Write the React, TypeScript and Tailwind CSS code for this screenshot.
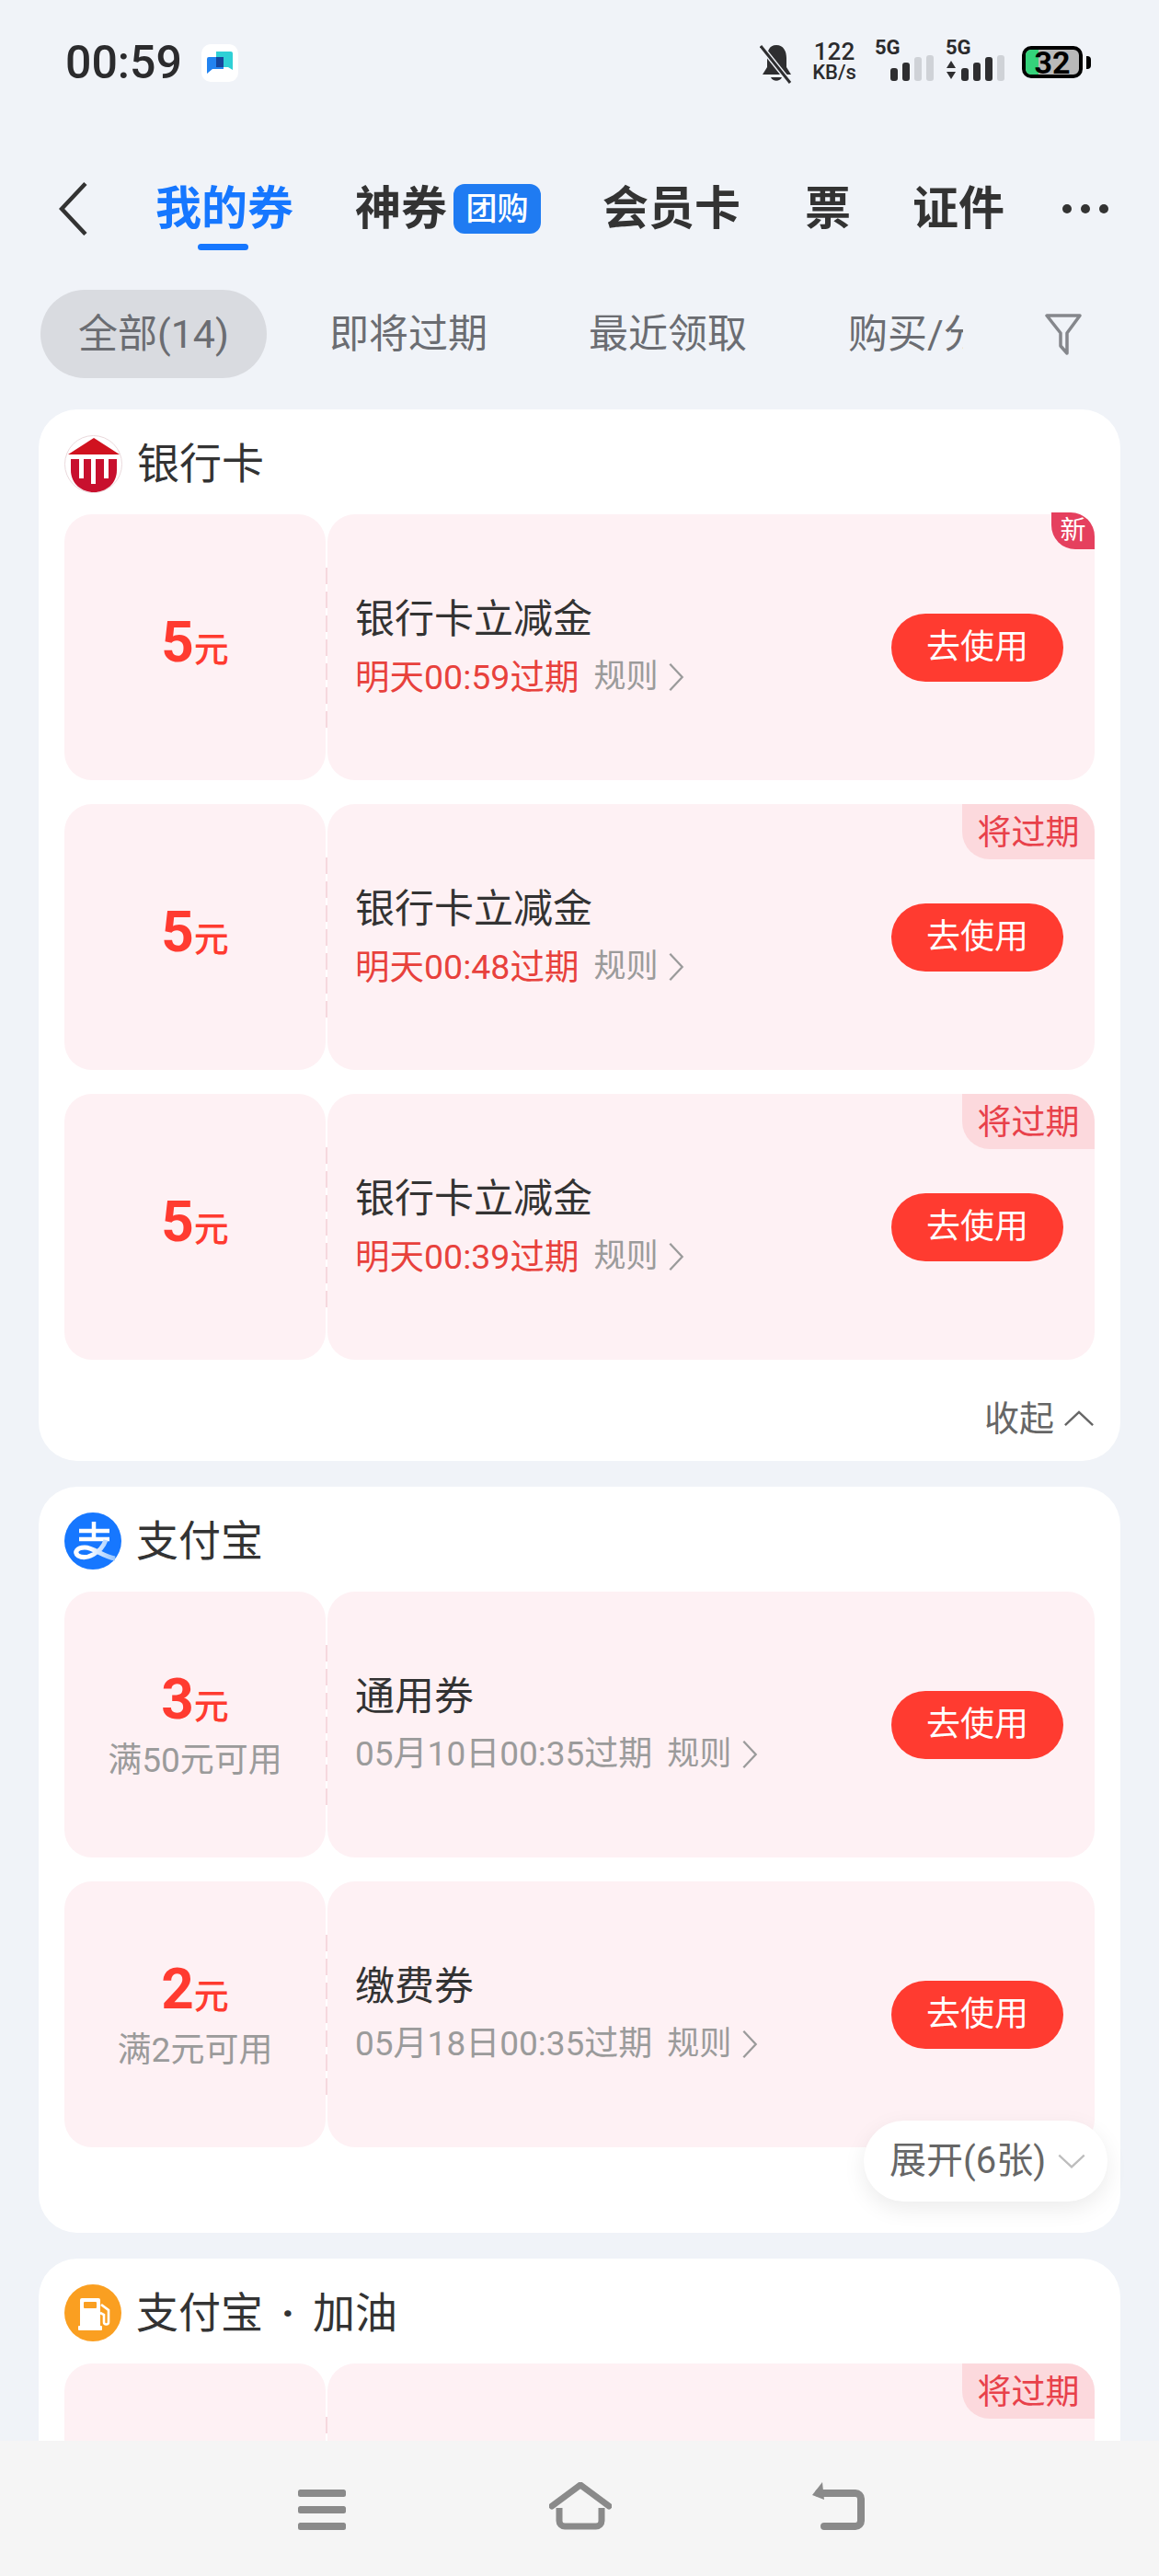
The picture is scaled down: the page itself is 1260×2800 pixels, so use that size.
import React from "react";

const FONT = 'Roboto, "Noto Sans CJK SC", sans-serif';

function Chevron({ dir, className }: { dir: "left" | "right" | "up" | "down"; className?: string }) {
  const d = {
    left: "M18 2 L3 18 L18 34",
    right: "M3 2 L18 18 L3 34",
    up: "M2 18 L18 3 L34 18",
    down: "M2 3 L18 18 L34 3",
  }[dir];
  const box = dir === "left" || dir === "right" ? "0 0 21 36" : "0 0 36 21";
  return (
    <svg viewBox={box} className={className} fill="none" stroke="currentColor" strokeWidth="2.6">
      <path d={d} />
    </svg>
  );
}

function Signal({ lit }: { lit: number }) {
  return (
    <svg width="48" height="28" viewBox="0 0 48 28">
      {[0, 1, 2, 3].map((i) => {
        const h = [14, 20, 26, 28][i];
        return (
          <rect key={i} x={i * 13} y={28 - h} width="8" height={h} rx="3" fill={i < lit ? "#2e2e30" : "#cfd2d7"} />
        );
      })}
    </svg>
  );
}

function StatusBar() {
  return (
    <div className="h-[170px] flex items-start justify-between pl-[71px] pr-[74px] pt-[44px] text-[#2b2b2d]">
      <div className="flex items-center">
        <span className="text-[50px] leading-[48px] font-medium">00:59</span>
        <div className="ml-[21px] w-[40px] h-[41px] rounded-[10px] bg-white flex items-center justify-center">
          <svg width="30" height="28" viewBox="0 0 30 28">
            <path d="M11 2 H27 a2 2 0 0 1 2 2 V22 L24 19 H11 Z" fill="#2fd0d6" />
            <path d="M3 8 H19 V21 H7 L1 26 V10 a2 2 0 0 1 2 -2 Z" fill="#2283f0" />
            <rect x="11" y="8" width="8" height="11" fill="#15459c" />
          </svg>
        </div>
      </div>
      <div className="flex items-start">
        <svg width="36" height="44" viewBox="0 0 36 44" className="mt-[3px]">
          <path d="M18 2 C26 2 29 9 29 16 V26 L34 34 H3 L8 26 V16 C8 9 10 2 18 2 Z" fill="#2e2e30" />
          <path d="M12 37 H24 C22 42 14 42 12 37 Z" fill="#2e2e30" />
          <path d="M1 3 L33 43" stroke="#f0f3f8" strokeWidth="6" />
          <path d="M1 3 L33 43" stroke="#2e2e30" strokeWidth="3" />
        </svg>
        <div className="ml-[20px] w-[50px] flex flex-col items-center font-medium whitespace-nowrap">
          <span className="text-[26px] leading-[24px]">122</span>
          <span className="text-[22px] leading-[22px]">KB/s</span>
        </div>
        <div className="ml-[19px] w-[65px] flex flex-col -mt-[2px]">
          <span className="text-[22px] leading-[20px] font-bold">5G</span>
          <div className="self-end -mt-[2px]">
            <Signal lit={2} />
          </div>
        </div>
        <div className="ml-[12px] w-[65px] flex flex-col -mt-[2px]">
          <span className="text-[22px] leading-[20px] font-bold">5G</span>
          <div className="flex items-end justify-between -mt-[2px]">
            <svg width="12" height="24" viewBox="0 0 12 24">
              <path d="M6 2 L11 10 H1 Z M6 22 L11 14 H1 Z" fill="#2e2e30" />
            </svg>
            <Signal lit={3} />
          </div>
        </div>
        <div className="ml-[18px] mt-[6px] flex items-center">
          <div className="relative w-[66px] h-[35px] rounded-[10px] border-[4px] border-black bg-[#b9b9b9] overflow-hidden">
            <div className="h-full w-[14px] bg-[#34d27b]" />
            <span className="absolute inset-0 flex items-center justify-center text-[34px] leading-none font-bold text-black">
              32
            </span>
          </div>
          <div className="ml-[4px] w-[5px] h-[14px] rounded-r-[4px] bg-black" />
        </div>
      </div>
    </div>
  );
}

function TabBar() {
  return (
    <div className="h-[114px] flex items-center text-[50px] leading-none font-bold text-[#333]">
      <Chevron dir="left" className="ml-[61px] w-[38px] h-[62px] text-[#333]" />
      <div className="relative ml-[70px] text-[#1677ff]">
        我的券
        <div className="absolute left-[46px] -bottom-[20px] w-[55px] h-[7px] rounded-full bg-[#1677ff]" />
      </div>
      <span className="ml-[67px]">神券</span>
      <span className="ml-[7px] w-[95px] h-[54px] rounded-[12px] bg-[#1f7bf2] text-white text-[34px] font-medium flex items-center justify-center">
        团购
      </span>
      <span className="ml-[67px]">会员卡</span>
      <span className="ml-[70px]">票</span>
      <span className="ml-[67px]">证件</span>
      <svg width="52" height="12" viewBox="0 0 52 12" className="ml-[62px]">
        <circle cx="6" cy="6" r="5" fill="#333" />
        <circle cx="26" cy="6" r="5" fill="#333" />
        <circle cx="46" cy="6" r="5" fill="#333" />
      </svg>
    </div>
  );
}

function FilterBar() {
  return (
    <div className="mt-[31px] mb-[34px] h-[96px] flex items-center text-[43px] text-[#6b6d72]">
      <div className="ml-[44px] w-[246px] h-full rounded-full bg-[#d9dbe0] flex items-center justify-center">全部(14)</div>
      <span className="ml-[68px]">即将过期</span>
      <span className="ml-[110px]">最近领取</span>
      <div className="ml-[110px] w-[125px] overflow-hidden whitespace-nowrap">购买/分享</div>
      <svg width="40" height="46" viewBox="0 0 40 46" className="ml-[89px]" fill="none" stroke="#85878c" strokeWidth="3.5">
        <path d="M2 3 H38 L24 22 V44 L17 36 V22 Z" strokeLinejoin="round" />
      </svg>
    </div>
  );
}

type Coupon = {
  amount: string;
  limit?: string;
  title: string;
  expiry: string;
  urgent?: boolean;
  tag?: "new" | "soon";
};

function CouponTile({ amount, limit, title, expiry, urgent, tag }: Coupon) {
  return (
    <div className="h-[289px] flex">
      <div className="w-[284px] rounded-[30px] bg-[#fef1f4] flex flex-col items-center justify-center">
        <div className={limit ? "flex items-baseline text-[#ff3b30] h-[66px]" : "flex items-baseline text-[#ff3b30] -mt-[12px]"}>
          <span className="text-[62px] leading-[66px] font-bold">{amount}</span>
          <span className="text-[38px] leading-[38px] font-medium">元</span>
        </div>
        {limit && <div className="mt-[12px] text-[37px] leading-[44px] text-[#9b9b9b]">{limit}</div>}
      </div>
      <div className="relative ml-[2px] flex-1 rounded-[30px] bg-[#fef1f4] flex items-center pl-[30px] pr-[34px]">
        <div className="absolute left-[-2px] top-[58px] h-[180px] w-[2px] bg-[repeating-linear-gradient(to_bottom,#f6d8de_0,#f6d8de_18px,transparent_18px,transparent_26px)]" />
        <div className="flex-1 -mt-[4px]">
          <div className="text-[43px] leading-[56px] text-[#333]">{title}</div>
          <div className="mt-[13px] flex items-center leading-[44px]">
            <span className={urgent ? "text-[37.5px] text-[#e8413c]" : "text-[37px] text-[#9b9b9b]"}>{expiry}</span>
            <span className="ml-[16px] text-[35px] text-[#9b9b9b]">规则</span>
            <Chevron dir="right" className="ml-[10px] w-[20px] h-[32px] text-[#9b9b9b]" />
          </div>
        </div>
        <div className="w-[187px] h-[74px] rounded-full bg-[#ff3b30] text-white text-[37px] flex items-center justify-center">
          去使用
        </div>
        {tag === "soon" && (
          <div className="absolute right-0 top-0 w-[144px] h-[60px] pt-[3px] rounded-tr-[30px] rounded-bl-[30px] bg-[#fcd9dd] text-[#e8414a] text-[37px] flex items-center justify-center">
            将过期
          </div>
        )}
        {tag === "new" && (
          <div className="absolute right-0 -top-[2px] w-[47px] h-[40px] rounded-tr-[26px] rounded-bl-[26px] bg-[#e5405e] text-white text-[28px] leading-none flex items-center justify-center">
            新
          </div>
        )}
      </div>
    </div>
  );
}

function BankLogo() {
  return (
    <svg width="63" height="63" viewBox="0 0 63 63">
      <circle cx="31.5" cy="31.5" r="31" fill="#fff" stroke="#ead9dc" />
      <path d="M32 3 L60 21 H4 Z" fill="#d0121f" />
      <path d="M7 26 H57 V38 C57 53 45 62 32 62 C19 62 7 53 7 38 Z" fill="#c8102e" />
      <rect x="16" y="26" width="5" height="21" fill="#fff" />
      <rect x="29" y="26" width="5" height="27" fill="#fff" />
      <rect x="43" y="26" width="5" height="21" fill="#fff" />
    </svg>
  );
}

function AlipayLogo() {
  return (
    <svg width="62" height="62" viewBox="0 0 62 62">
      <defs>
        <linearGradient id="alipay-tail" x1="26" y1="0" x2="56" y2="0" gradientUnits="userSpaceOnUse">
          <stop offset="0" stopColor="#fff" />
          <stop offset="1" stopColor="#8fc1ff" />
        </linearGradient>
      </defs>
      <circle cx="31" cy="31" r="31" fill="#1677ff" />
      <path d="M16 20 H49 M16 29 H49 M32 10 V29" stroke="#fff" strokeWidth="4.5" fill="none" />
      <path d="M45 30 C40 44 24 52 15 47 C10 43 14 38 22 38 C32 38 42 48 55 50" stroke="url(#alipay-tail)" strokeWidth="5" fill="none" />
    </svg>
  );
}

function FuelLogo() {
  return (
    <svg width="62" height="62" viewBox="0 0 62 62">
      <circle cx="31" cy="31" r="31" fill="#fa9f21" />
      <path d="M17 17 a2 2 0 0 1 2 -2 H37 a2 2 0 0 1 2 2 V46 H17 Z" fill="#fff" />
      <rect x="21" y="19" width="14" height="7" rx="1" fill="#fa9f21" />
      <rect x="15" y="45" width="26" height="5" rx="1" fill="#fff" />
      <path d="M40 22 L48 28 V41 a2.5 2.5 0 0 1 -5 0 V33 L39 31" fill="none" stroke="#fff" strokeWidth="2.6" />
    </svg>
  );
}

function Card({ logo, name, children, footer }: { logo: React.ReactNode; name: React.ReactNode; children: React.ReactNode; footer: React.ReactNode }) {
  return (
    <div className="mx-[42px] rounded-[42px] bg-white px-[28px]">
      <div className="h-[114px] pt-[4px] flex items-center">
        {logo}
        <span className="ml-[16px] text-[46px] leading-none text-[#333]">{name}</span>
      </div>
      <div className="flex flex-col gap-[26px]">{children}</div>
      {footer}
    </div>
  );
}

function NavBar() {
  return (
    <div className="relative z-10 h-[147px] shrink-0 bg-[#f5f5f5] flex items-start pt-[45px]">
      <svg width="54" height="44" viewBox="0 0 54 44" className="ml-[323px] mt-[8px]" fill="#8a8a8a">
        <rect x="1" y="0" width="52" height="8" rx="2.5" />
        <rect x="1" y="18" width="52" height="8" rx="2.5" />
        <rect x="1" y="36" width="52" height="8" rx="2.5" />
      </svg>
      <svg width="68" height="52" viewBox="0 0 68 52" className="ml-[220px]" fill="none" stroke="#8a8a8a" strokeWidth="7" strokeLinecap="round">
        <path d="M3 26 L34 3 L65 26" strokeLinejoin="round" />
        <path d="M11 28 V42 a6 6 0 0 0 6 6 H51 a6 6 0 0 0 6 -6 V28" strokeLinecap="butt" />
      </svg>
      <svg width="60" height="52" viewBox="0 0 60 52" className="ml-[217px]" fill="none">
        <path d="M12 0 L1 14 L14 19 Z" fill="#8a8a8a" />
        <path d="M8 12 H48 a6 6 0 0 1 6 6 V42 a6 6 0 0 1 -6 6 H14" stroke="#8a8a8a" strokeWidth="8" strokeLinecap="round" />
      </svg>
    </div>
  );
}

export default function App() {
  return (
    <div className="w-[1260px] h-[2800px] overflow-hidden bg-[#f0f3f8] flex flex-col" style={{ fontFamily: FONT }}>
      <div className="flex-1 min-h-0 overflow-hidden">
        <StatusBar />
        <TabBar />
        <FilterBar />
        <div className="flex flex-col gap-[28px]">
          <Card
            logo={<BankLogo />}
            name="银行卡"
            footer={
              <div className="h-[110px] flex items-center justify-end pt-[18px] text-[38px] text-[#666]">
                收起
                <Chevron dir="up" className="ml-[10px] w-[34px] h-[20px] text-[#666]" />
              </div>
            }
          >
            <CouponTile amount="5" title="银行卡立减金" expiry="明天00:59过期" urgent tag="new" />
            <CouponTile amount="5" title="银行卡立减金" expiry="明天00:48过期" urgent tag="soon" />
            <CouponTile amount="5" title="银行卡立减金" expiry="明天00:39过期" urgent tag="soon" />
          </Card>
          <div className="relative">
            <Card logo={<AlipayLogo />} name="支付宝" footer={<div className="h-[93px]" />}>
              <CouponTile amount="3" limit="满50元可用" title="通用券" expiry="05月10日00:35过期" />
              <CouponTile amount="2" limit="满2元可用" title="缴费券" expiry="05月18日00:35过期" />
            </Card>
            <div className="absolute left-[939px] top-[689px] w-[265px] h-[88px] rounded-full bg-white shadow-[0_8px_24px_rgba(0,0,0,0.08)] flex items-center pl-[28px] text-[40px] text-[#666]">
              展开(6张)
              <Chevron dir="down" className="ml-[12px] w-[32px] h-[18px] text-[#bdbdbd]" />
            </div>
          </div>
          <Card
            logo={<FuelLogo />}
            name={
              <>
                支付宝<span className="mx-[20px] font-bold">·</span>加油
              </>
            }
            footer={null}
          >
            <CouponTile amount="" title="" expiry="" tag="soon" />
          </Card>
        </div>
      </div>
      <NavBar />
    </div>
  );
}
